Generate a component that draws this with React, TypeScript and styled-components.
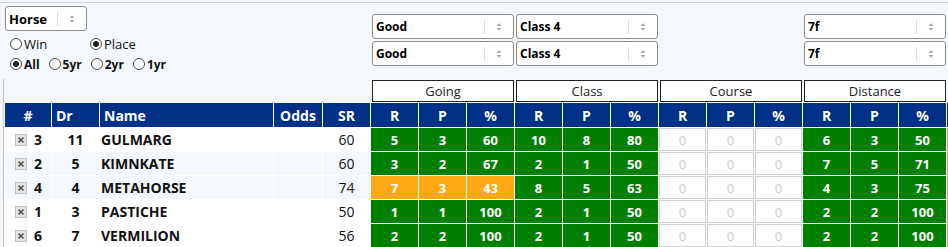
import React from "react";
import styled, { createGlobalStyle } from "styled-components";

const GlobalStyle = createGlobalStyle`
  html, body { margin: 0; padding: 0; background: #f4f7fc; }
  body { font-family: "Open Sans", "Noto Sans", sans-serif; overflow: hidden; }
`;

const Page = styled.div`
  margin-top: 2px;
  border-top: 1px solid #d2d2d2;
  width: 948px;
  height: 244px;
  overflow: hidden;
`;

const TopBar = styled.div`
  display: flex;
  height: 76px;
`;

const LeftPanel = styled.div`
  width: 371px;
  box-sizing: border-box;
  padding: 3px 0 0 5px;
  display: flex;
  flex-direction: column;
`;

const SelectColumn = styled.div`
  width: 144px;
  box-sizing: border-box;
  padding: 11px 1px 0 1px;
  display: flex;
  flex-direction: column;
  gap: 2px;
`;

const SelectBox = styled.div<{ $w?: number }>`
  display: flex;
  align-items: center;
  width: ${(p) => (p.$w ? `${p.$w}px` : "100%")};
  height: 25px;
  box-sizing: border-box;
  border: 1px solid #8c8c8c;
  border-radius: 3px;
  background: #fff;
`;

const SelectText = styled.span<{ $big?: boolean }>`
  flex: 1;
  padding-left: 3px;
  font-weight: 700;
  font-size: ${(p) => (p.$big ? "13px" : "12px")};
  color: #000;
  white-space: nowrap;
`;

const SelectSep = styled.span`
  width: 1px;
  height: 14px;
  background: #dcdcdc;
`;

const SelectArrows = styled.span`
  width: 28px;
  display: flex;
  align-items: center;
  justify-content: center;
`;

const RadioRow = styled.div<{ $first?: boolean }>`
  display: flex;
  align-items: center;
  height: 20px;
  margin-top: ${(p) => (p.$first ? "3px" : "0")};
  padding-left: 5px;
  gap: 9px;
`;

const RadioItem = styled.label<{ $w?: number; $bold?: boolean }>`
  display: inline-flex;
  align-items: center;
  gap: 2px;
  width: ${(p) => (p.$w ? `${p.$w}px` : "auto")};
  font-size: ${(p) => (p.$bold ? "12px" : "13px")};
  font-weight: ${(p) => (p.$bold ? 700 : 400)};
  color: #111;
`;

const RadioCircle = styled.span<{ $checked?: boolean }>`
  position: relative;
  width: 12px;
  height: 12px;
  box-sizing: border-box;
  border: 1px solid #4a4a4a;
  border-radius: 50%;
  background: #fff;
  &::after {
    content: "";
    display: ${(p) => (p.$checked ? "block" : "none")};
    position: absolute;
    left: 2px;
    top: 2px;
    width: 6px;
    height: 6px;
    border-radius: 50%;
    background: #222;
  }
`;

const TableArea = styled.div`
  margin-left: 3px;
  border-left: 1px solid #c4c4c4;
`;

const GroupRow = styled.div`
  display: flex;
  height: 23px;
  padding-left: 367px;
`;

const GroupCell = styled.div`
  width: 143px;
  margin-right: 1px;
  padding: 1px 0 0 1px;
  box-sizing: border-box;
`;

const GroupBox = styled.div`
  height: 22px;
  box-sizing: border-box;
  border: 1px solid #222;
  background: #fff;
  display: flex;
  align-items: center;
  justify-content: center;
  font-size: 13px;
  color: #222;
`;

const Table = styled.table`
  border-collapse: separate;
  border-spacing: 1px;
  table-layout: fixed;
  width: 991px;
  background: #fff;
`;

const Col = styled.col<{ $w: number }>`
  width: ${(p) => p.$w}px;
`;

const HeadCell = styled.th<{ $left?: boolean }>`
  height: 24px;
  padding: ${(p) => (p.$left ? "0 0 0 4px" : "0")};
  box-sizing: border-box;
  background: #003087;
  color: #fff;
  font-size: 14px;
  font-weight: 700;
  text-align: ${(p) => (p.$left ? "left" : "center")};
  white-space: nowrap;
`;

const BodyRow = styled.tr<{ $alt?: boolean }>`
  & > td {
    background: ${(p) => (p.$alt ? "#f4f7fc" : "#fff")};
  }
`;

const Cell = styled.td<{ $bold?: boolean }>`
  height: 23px;
  padding: 0;
  box-sizing: border-box;
  font-size: 14px;
  font-weight: ${(p) => (p.$bold ? 700 : 400)};
  color: #111;
  text-align: center;
  white-space: nowrap;
  overflow: hidden;
`;

const NumCell = styled.td`
  height: 23px;
  padding: 0 0 0 10px;
  box-sizing: border-box;
`;

const NumInner = styled.span`
  display: flex;
  align-items: center;
  gap: 7px;
  font-size: 14px;
  font-weight: 700;
  color: #111;
`;

const NameCell = styled.td`
  height: 23px;
  padding: 0 0 0 1px;
  box-sizing: border-box;
  font-size: 14px;
  font-weight: 700;
  color: #111;
  text-align: left;
  white-space: nowrap;
  overflow: hidden;
`;

type Tone = "green" | "orange" | "zero";

const StatCell = styled.td<{ $tone: Tone }>`
  && {
    background: ${(p) =>
      p.$tone === "green" ? "#008000" : p.$tone === "orange" ? "#ffa812" : "#fff"};
  }
  height: 23px;
  padding: 0;
  box-sizing: border-box;
  border: ${(p) => (p.$tone === "zero" ? "1px solid #cfcfcf" : "none")};
  color: ${(p) => (p.$tone === "zero" ? "#c8c8c8" : "#fff")};
  font-size: 13px;
  font-weight: ${(p) => (p.$tone === "zero" ? 400 : 700)};
  text-align: center;
`;

const ExtraCell = styled.td`
  && {
    background: #fff;
  }
  height: 23px;
  padding: 0;
  box-sizing: border-box;
  border-left: 1px solid #f08c8c;
`;

const Arrows = () => (
  <svg width="6" height="10" viewBox="0 0 6 10">
    <path d="M0.5 4 L3 1.2 L5.5 4 Z" fill="#a8a8a8" />
    <path d="M0.5 6 L3 8.8 L5.5 6 Z" fill="#a8a8a8" />
  </svg>
);

const CheckX = () => (
  <svg width="12" height="12" viewBox="0 0 12 12">
    <rect x="0.5" y="0.5" width="11" height="11" fill="#e4e4e4" stroke="#c2c2c2" />
    <path d="M3.5 3.5 L8.5 8.5 M8.5 3.5 L3.5 8.5" stroke="#555" strokeWidth="1.7" />
  </svg>
);

const Select = ({ value, w, big }: { value: string; w?: number; big?: boolean }) => (
  <SelectBox $w={w}>
    <SelectText $big={big}>{value}</SelectText>
    <SelectSep />
    <SelectArrows>
      <Arrows />
    </SelectArrows>
  </SelectBox>
);

const Radio = ({
  label,
  checked,
  bold,
  w,
}: {
  label: string;
  checked?: boolean;
  bold?: boolean;
  w?: number;
}) => (
  <RadioItem $bold={bold} $w={w}>
    <RadioCircle $checked={checked} />
    {label}
  </RadioItem>
);

type Row = {
  num: number;
  dr: number;
  name: string;
  sr: number;
  going: [number, number, number];
  goingTone: Tone;
  cls: [number, number, number];
  dist: [number, number, number];
  alt?: boolean;
};

const rows: Row[] = [
  { num: 3, dr: 11, name: "GULMARG", sr: 60, going: [5, 3, 60], goingTone: "green", cls: [10, 8, 80], dist: [6, 3, 50] },
  { num: 2, dr: 5, name: "KIMNKATE", sr: 60, going: [3, 2, 67], goingTone: "green", cls: [2, 1, 50], dist: [7, 5, 71], alt: true },
  { num: 4, dr: 4, name: "METAHORSE", sr: 74, going: [7, 3, 43], goingTone: "orange", cls: [8, 5, 63], dist: [4, 3, 75], alt: true },
  { num: 1, dr: 3, name: "PASTICHE", sr: 50, going: [1, 1, 100], goingTone: "green", cls: [2, 1, 50], dist: [2, 2, 100] },
  { num: 6, dr: 7, name: "VERMILION", sr: 56, going: [2, 2, 100], goingTone: "green", cls: [2, 1, 50], dist: [2, 2, 100] },
];

const colWidths = [46, 47, 173, 48, 47, ...Array(12).fill(47), 47];
const groups = ["Going", "Class", "Course", "Distance"];

export default function App() {
  return (
    <>
      <GlobalStyle />
      <Page>
        <TopBar>
          <LeftPanel>
            <Select value="Horse" w={82} big />
            <RadioRow $first>
              <Radio label="Win" w={71} />
              <Radio label="Place" checked />
            </RadioRow>
            <RadioRow>
              <Radio label="All" checked bold />
              <Radio label="5yr" bold />
              <Radio label="2yr" bold />
              <Radio label="1yr" bold />
            </RadioRow>
          </LeftPanel>
          <SelectColumn>
            <Select value="Good" />
            <Select value="Good" />
          </SelectColumn>
          <SelectColumn>
            <Select value="Class 4" />
            <Select value="Class 4" />
          </SelectColumn>
          <SelectColumn />
          <SelectColumn>
            <Select value="7f" />
            <Select value="7f" />
          </SelectColumn>
        </TopBar>
        <TableArea>
          <GroupRow>
            {groups.map((g) => (
              <GroupCell key={g}>
                <GroupBox>{g}</GroupBox>
              </GroupCell>
            ))}
          </GroupRow>
          <Table>
            <colgroup>
              {colWidths.map((w, i) => (
                <Col key={i} $w={w} />
              ))}
            </colgroup>
            <thead>
              <tr>
                <HeadCell>#</HeadCell>
                <HeadCell $left>Dr</HeadCell>
                <HeadCell $left>Name</HeadCell>
                <HeadCell>Odds</HeadCell>
                <HeadCell>SR</HeadCell>
                {groups.map((g) => (
                  <React.Fragment key={g}>
                    <HeadCell>R</HeadCell>
                    <HeadCell>P</HeadCell>
                    <HeadCell>%</HeadCell>
                  </React.Fragment>
                ))}
                <HeadCell />
              </tr>
            </thead>
            <tbody>
              {rows.map((r) => (
                <BodyRow key={r.name} $alt={r.alt}>
                  <NumCell>
                    <NumInner>
                      <CheckX />
                      {r.num}
                    </NumInner>
                  </NumCell>
                  <Cell $bold>{r.dr}</Cell>
                  <NameCell>{r.name}</NameCell>
                  <Cell />
                  <Cell>{r.sr}</Cell>
                  {r.going.map((v, i) => (
                    <StatCell key={`g${i}`} $tone={r.goingTone}>
                      {v}
                    </StatCell>
                  ))}
                  {r.cls.map((v, i) => (
                    <StatCell key={`c${i}`} $tone="green">
                      {v}
                    </StatCell>
                  ))}
                  {[0, 0, 0].map((v, i) => (
                    <StatCell key={`o${i}`} $tone="zero">
                      {v}
                    </StatCell>
                  ))}
                  {r.dist.map((v, i) => (
                    <StatCell key={`d${i}`} $tone="green">
                      {v}
                    </StatCell>
                  ))}
                  <ExtraCell />
                </BodyRow>
              ))}
            </tbody>
          </Table>
        </TableArea>
      </Page>
    </>
  );
}
